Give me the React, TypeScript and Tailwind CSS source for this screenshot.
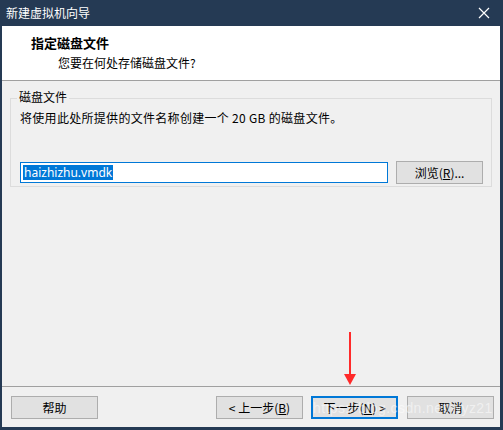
import React from 'react';

const font = { fontFamily: '"Noto Sans CJK SC", "Liberation Sans", sans-serif' };

const Btn: React.FC<{ children: React.ReactNode; primary?: boolean; className?: string }> = ({
  children,
  primary,
  className = '',
}) => (
  <div
    className={`h-[23px] w-[87px] flex items-center justify-center bg-[#e1e1e1] text-[12px] text-black ${
      primary ? 'border-2 border-[#0078d7]' : 'border border-[#adadad]'
    } ${className}`}
  >
    {children}
  </div>
);

export default function App() {
  return (
    <div
      className="relative w-[503px] h-[430px] flex flex-col bg-[#253a54] overflow-hidden"
      style={font}
    >
      {/* Title bar */}
      <div className="h-[26px] flex items-center justify-between pl-[6px] pr-[12px] text-white text-[12px]">
        <span>新建虚拟机向导</span>
        <svg width="12" height="12" viewBox="0 0 12 12" className="mr-[1px]">
          <path d="M1 1 L11 11 M11 1 L1 11" stroke="white" strokeWidth="1.2" />
        </svg>
      </div>

      <div className="flex-1 flex flex-col mx-[2px] mr-[3px] mb-[3px] bg-[#f0f0f0]">
        {/* Header */}
        <div className="h-[55px] bg-white border-b border-[#a0a0a0] pl-[29px] pt-[8px]">
          <div className="text-[13px] font-bold leading-[18px] text-black">指定磁盘文件</div>
          <div className="pl-[27px] mt-[3px] text-[12px] leading-[16px] text-black">
            您要在何处存储磁盘文件?
          </div>
        </div>

        {/* Body */}
        <div className="flex-1 px-[8px] pt-[17px]">
          <div className="relative border border-[#dcdcdc] h-[89px] pl-[9px] pr-[8px]">
            <span className="absolute -top-[10px] left-[6px] bg-[#f0f0f0] px-[2px] text-[12px] leading-[16px] text-black">
              磁盘文件
            </span>
            <div className="pt-[11px] text-[12px] leading-[16px] text-black tracking-[0.3px]">
              将使用此处所提供的文件名称创建一个 20 GB 的磁盘文件。
            </div>
            <div className="mt-[35px] flex items-center gap-[8px]">
              <div className="w-[369px] h-[21px] border border-[#0078d7] bg-white flex items-center pl-[2px]">
                <span
                  className="bg-[#0078d7] text-white text-[12px] leading-[15px] px-[1px]"
                  style={{ fontFamily: '"Noto Sans", "Liberation Sans", sans-serif' }}
                >
                  haizhizhu.vmdk
                </span>
              </div>
              <Btn>
                浏览(<span className="underline">R</span>)...
              </Btn>
            </div>
          </div>
        </div>

        {/* Footer */}
        <div className="h-[41px] border-t border-[#a0a0a0] flex items-start pt-[9px] pl-[9px]">
          <Btn>帮助</Btn>
          <div className="flex-1" />
          <Btn className="mr-[8px]">
            &lt; 上一步(<span className="underline">B</span>)
          </Btn>
          <Btn primary className="mr-[9px]">
            下一步(<span className="underline">N</span>) &gt;
          </Btn>
          <Btn className="mr-[6px]">取消</Btn>
        </div>
      </div>

      {/* Red arrow annotation */}
      <svg className="absolute left-[343px] top-[332px]" width="14" height="54" viewBox="0 0 14 54">
        <path d="M7 0 L7 44" stroke="#ff2a2a" strokeWidth="2" />
        <path d="M1 42 L13 42 L7 53 Z" fill="#ff2a2a" />
      </svg>

      {/* Watermark */}
      <div
        className="absolute left-[313px] top-[399px] text-[14px] leading-[18px] text-white/50 tracking-[0.4px] pointer-events-none"
        style={{ fontFamily: '"Liberation Sans", sans-serif' }}
      >
        https://blog.csdn.net/wyz21
      </div>
    </div>
  );
}
